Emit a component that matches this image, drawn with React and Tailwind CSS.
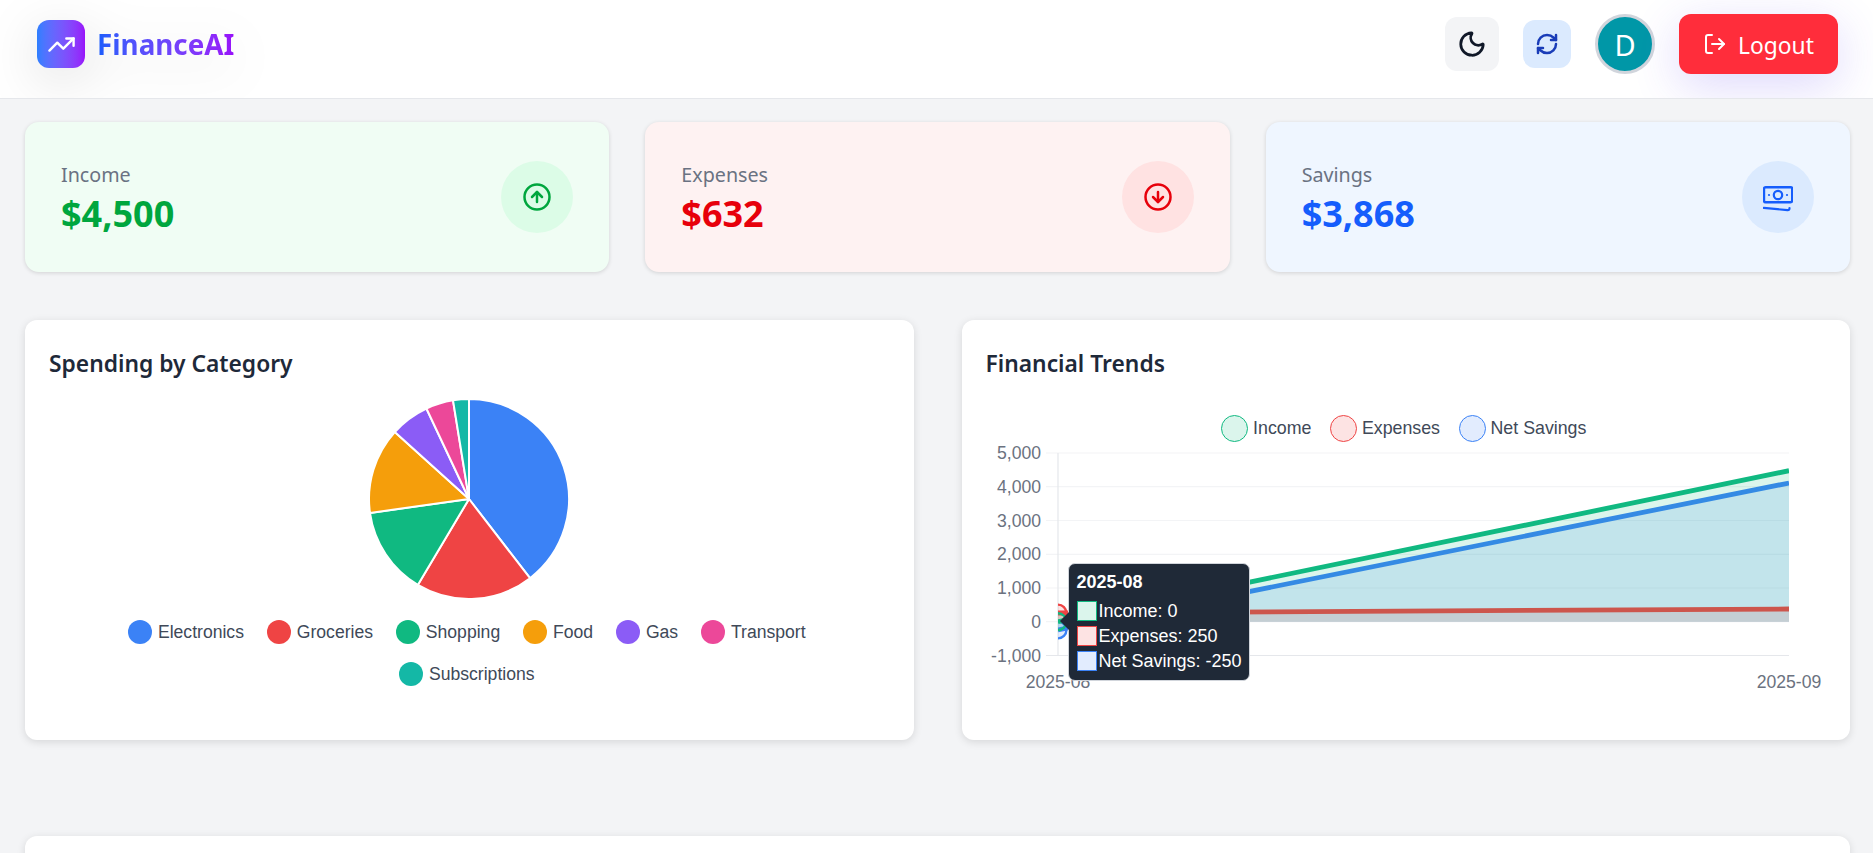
import React from "react";
import { ArrowUpCircle, ArrowDownCircle, Moon, RefreshCw, LogOut, TrendingUp } from "lucide-react";

function CashIcon({ className }) {
  return (
    <svg width="30" height="30" viewBox="0 0 30 30" fill="none" stroke="currentColor" className={className}>
      <rect x="1" y="5.2" width="28.2" height="15" rx="1.6" strokeWidth="2.4" />
      <circle cx="15" cy="13" r="4.2" strokeWidth="2.2" />
      <circle cx="6" cy="13" r="1.1" fill="currentColor" stroke="none" />
      <circle cx="24" cy="13" r="1.1" fill="currentColor" stroke="none" />
      <path d="M0.8 25.8L24.5 28.2Q26.5 28.4 26.5 26" strokeWidth="2.2" strokeLinecap="round" />
    </svg>
  );
}

const cards = [
  { label: "Income", value: "$4,500", bg: "bg-[#f0fdf4]", text: "text-[#00a63e]", circle: "bg-[#dcfce7]", icon: <ArrowUpCircle size={30} strokeWidth={2} className="text-[#00a63e]" /> },
  { label: "Expenses", value: "$632", bg: "bg-[#fef2f2]", text: "text-[#e7000b]", circle: "bg-[#ffe2e2]", icon: <ArrowDownCircle size={30} strokeWidth={2} className="text-[#e7000b]" /> },
  { label: "Savings", value: "$3,868", bg: "bg-[#eff6ff]", text: "text-[#155dfc]", circle: "bg-[#dbeafe]", icon: <CashIcon className="text-[#155dfc]" /> },
];

const pieData = [
  { name: "Electronics", color: "#3b82f6", end: 142.4 },
  { name: "Groceries", color: "#ef4444", end: 210.8 },
  { name: "Shopping", color: "#10b981", end: 262 },
  { name: "Food", color: "#f59e0b", end: 312.1 },
  { name: "Gas", color: "#8b5cf6", end: 334.8 },
  { name: "Transport", color: "#ec4899", end: 350.8 },
  { name: "Subscriptions", color: "#14b8a6", end: 360 },
];

function Pie() {
  const r = 100, c = 101;
  const pt = (a) => {
    const t = (a * Math.PI) / 180;
    return [c + r * Math.sin(t), c - r * Math.cos(t)];
  };
  let start = 0;
  return (
    <svg width="202" height="202" viewBox="0 0 202 202" className="block">
      {pieData.map((d) => {
        const [x1, y1] = pt(start);
        const [x2, y2] = pt(d.end);
        const large = d.end - start > 180 ? 1 : 0;
        const path = `M${c} ${c}L${x1} ${y1}A${r} ${r} 0 ${large} 1 ${x2} ${y2}Z`;
        start = d.end;
        return <path key={d.name} d={path} fill={d.color} stroke="#fff" strokeWidth="2" strokeLinejoin="round" />;
      })}
    </svg>
  );
}

const yTicks = [
  ["5,000", 453],
  ["4,000", 486.7],
  ["3,000", 520.5],
  ["2,000", 554.3],
  ["1,000", 588],
  ["0", 621.7],
  ["-1,000", 655.5],
];

function LineChart() {
  const ox = 986, oy = 445;
  const X = (x) => x - ox;
  const Y = (y) => y - oy;
  const x0 = X(1058), x1 = X(1789), base = Y(621.7);
  const series = [
    { c: "#3b82f6", fill: "rgba(59,130,246,0.15)", a: Y(630), b: Y(483) },
    { c: "#ef4444", fill: "rgba(239,68,68,0.15)", a: Y(613), b: Y(609) },
    { c: "#10b981", fill: "rgba(16,185,129,0.15)", a: Y(621.7), b: Y(470.7) },
  ];
  return (
    <svg width="838" height="255" viewBox="0 0 838 255" className="block" fontFamily="'Liberation Sans', Arial, sans-serif" fontSize="17.6">
      <defs>
        <clipPath id="area">
          <rect x={x0} y={Y(453)} width={x1 - x0} height={Y(655.5) - Y(453)} />
        </clipPath>
      </defs>
      {yTicks.map(([t, y]) => (
        <g key={t}>
          <line x1={X(1046)} x2={x1} y1={Y(y)} y2={Y(y)} stroke={t === "-1,000" ? "#e5e7eb" : "#f3f4f6"} strokeWidth="1.2" />
          <text x={X(1041)} y={Y(y) + 6} textAnchor="end" fill="#6b7280">{t}</text>
        </g>
      ))}
      <line x1={x0} x2={x0} y1={Y(453)} y2={Y(656)} stroke="#e5e7eb" strokeWidth="1.2" />
      <text x={x0} y={Y(688)} textAnchor="middle" fill="#6b7280">2025-08</text>
      <text x={x1} y={Y(688)} textAnchor="middle" fill="#6b7280">2025-09</text>
      <g clipPath="url(#area)">
        {series.map((s) => (
          <g key={s.c}>
            <polygon points={`${x0},${base} ${x0},${s.a} ${x1},${s.b} ${x1},${base}`} fill={s.fill} />
            <line x1={x0} y1={s.a} x2={x1} y2={s.b} stroke={s.c} strokeWidth="4.8" />
            <circle cx={x0} cy={s.a} r="8.4" fill={s.fill} stroke={s.c} strokeWidth="2.4" />
          </g>
        ))}
      </g>
    </svg>
  );
}

const lineLegend = [
  { name: "Income", bg: "bg-[#dbf5ec]", border: "border-[#10b981]" },
  { name: "Expenses", bg: "bg-[#fde3e3]", border: "border-[#ef4444]" },
  { name: "Net Savings", bg: "bg-[#e2ecfe]", border: "border-[#3b82f6]" },
];

const tipRows = [
  { t: "Income: 0", bg: "bg-[#dbf5ec]", border: "border-[#10b981]" },
  { t: "Expenses: 250", bg: "bg-[#fde3e3]", border: "border-[#ef4444]" },
  { t: "Net Savings: -250", bg: "bg-[#e2ecfe]", border: "border-[#3b82f6]" },
];

export default function App() {
  return (
    <div className="h-[853px] overflow-hidden bg-[#f3f4f6] font-['Noto_Sans','Open_Sans',sans-serif]">
      <header className="h-[99px] overflow-hidden bg-white border-b border-[#e5e7eb] flex items-center justify-between pl-[37px] pr-[35px] pb-[10px]">
        <div className="flex items-center gap-[12px] drop-shadow-[0_12px_26px_rgba(0,0,0,0.12)]">
          <div className="w-[48px] h-[48px] rounded-[12px] bg-gradient-to-r from-[#2b7fff] to-[#9810fa] flex items-center justify-center">
            <TrendingUp size={29} strokeWidth={2} className="text-white" />
          </div>
          <span className="text-[27.8px] pt-[2px] font-bold leading-none bg-gradient-to-r from-[#155dfc] to-[#9810fa] bg-clip-text text-transparent">FinanceAI</span>
        </div>
        <div className="flex items-center">
          <button className="w-[54px] h-[54px] rounded-[12px] bg-[#f3f4f6] flex items-center justify-center">
            <Moon size={30} strokeWidth={2.2} className="text-[#101828]" />
          </button>
          <button className="ml-[24px] w-[48px] h-[48px] rounded-[12px] bg-[#dbeafe] flex items-center justify-center">
            <RefreshCw size={24} strokeWidth={2.5} className="text-[#193cb8]" />
          </button>
          <div className="ml-[24px] w-[60px] h-[60px] rounded-full bg-[#0097a7] border-[3.5px] border-[#d1d5dc] flex items-center justify-center text-white text-[29px] leading-none">D</div>
          <button className="ml-[24px] w-[159px] h-[60px] rounded-[12px] bg-[#ff2d3b] text-white flex items-center justify-center gap-[11px] text-[22.8px] leading-none shadow-[0_12px_48px_rgba(90,60,240,0.2)]">
            <LogOut size={24} strokeWidth={2} />
            <span className="pt-[4px]">Logout</span>
          </button>
        </div>
      </header>

      <main className="pl-[25px] pr-[23px] pt-[23px]">
        <div className="grid grid-cols-3 gap-[36px]">
          {cards.map(({ label, value, bg, text, circle, icon }) => (
            <div key={label} className={`h-[150px] rounded-[14px] shadow-[0_1px_4px_rgba(0,0,0,0.14)] flex items-center justify-between pl-[36px] pr-[36px] ${bg}`}>
              <div className="flex flex-col pt-[5px]">
                <span className="text-[19.7px] leading-[26px] text-[#6a7282]">{label}</span>
                <span className={`text-[36px] leading-[46px] mt-[3px] font-bold ${text}`}>{value}</span>
              </div>
              <div className={`w-[72px] h-[72px] rounded-full flex items-center justify-center ${circle}`}>
                {icon}
              </div>
            </div>
          ))}
        </div>

        <div className="mt-[48px] grid grid-cols-2 gap-[48px]">
          <section className="h-[420px] rounded-[12px] bg-white shadow-[0_2px_8px_rgba(0,0,0,0.12)] pt-[29px] px-[24px]">
            <h2 className="text-[22.8px] leading-[30px] font-semibold text-[#1e2939]">Spending by Category</h2>
            <div className="mt-[19px] flex justify-center">
              <Pie />
            </div>
            <div className="mt-[20px] flex flex-wrap justify-center gap-x-[22.8px] gap-y-[18px] font-['Liberation_Sans',Arial,sans-serif] text-[17.6px] leading-[24px] text-[#404958] pl-[56px] pr-[61px]">
              {pieData.map((d) => (
                <div key={d.name} className="flex items-center gap-[6px]">
                  <span className="w-[24px] h-[24px] rounded-full" style={{ backgroundColor: d.color }} />
                  <span>{d.name}</span>
                </div>
              ))}
            </div>
          </section>

          <section className="relative h-[420px] rounded-[12px] bg-white shadow-[0_2px_8px_rgba(0,0,0,0.12)] pt-[29px] px-[24px]">
            <h2 className="text-[22.8px] leading-[30px] font-semibold text-[#1e2939]">Financial Trends</h2>
            <div className="mt-[36px] mr-[4px] flex justify-center gap-[18.5px] font-['Liberation_Sans',Arial,sans-serif] text-[17.8px] leading-[26px] text-[#404958] h-[26px]">
              {lineLegend.map((d) => (
                <div key={d.name} className="flex items-center gap-[5px]">
                  <span className={`w-[27px] h-[27px] rounded-full border-[1.8px] ${d.bg} ${d.border}`} />
                  <span>{d.name}</span>
                </div>
              ))}
            </div>
            <div className="mt-[4px]">
              <LineChart />
            </div>
            <div className="absolute left-[106px] top-[242.5px] w-[182px] h-[118px] rounded-[7px] bg-[#1f2937] border border-[#d1d5db] font-['Liberation_Sans',Arial,sans-serif] text-[18px] text-white pl-[8px] pt-[6px] whitespace-nowrap">
              <span className="absolute left-[-9px] top-[48px] w-0 h-0 border-y-[9px] border-y-transparent border-r-[9px] border-r-[#1f2937]" />
              <div className="font-bold leading-[24px]">2025-08</div>
              <div className="mt-[7.5px] flex flex-col gap-[4.9px]">
                {tipRows.map((r) => (
                  <div key={r.t} className="flex items-center gap-[2px] leading-[20px]">
                    <span className={`shrink-0 w-[20px] h-[20px] border-[1.5px] ${r.bg} ${r.border}`} />
                    <span>{r.t}</span>
                  </div>
                ))}
              </div>
            </div>
          </section>
        </div>

        <section className="mt-[96px] h-[200px] rounded-[12px] bg-white shadow-[0_2px_8px_rgba(0,0,0,0.12)]" />
      </main>
    </div>
  );
}
